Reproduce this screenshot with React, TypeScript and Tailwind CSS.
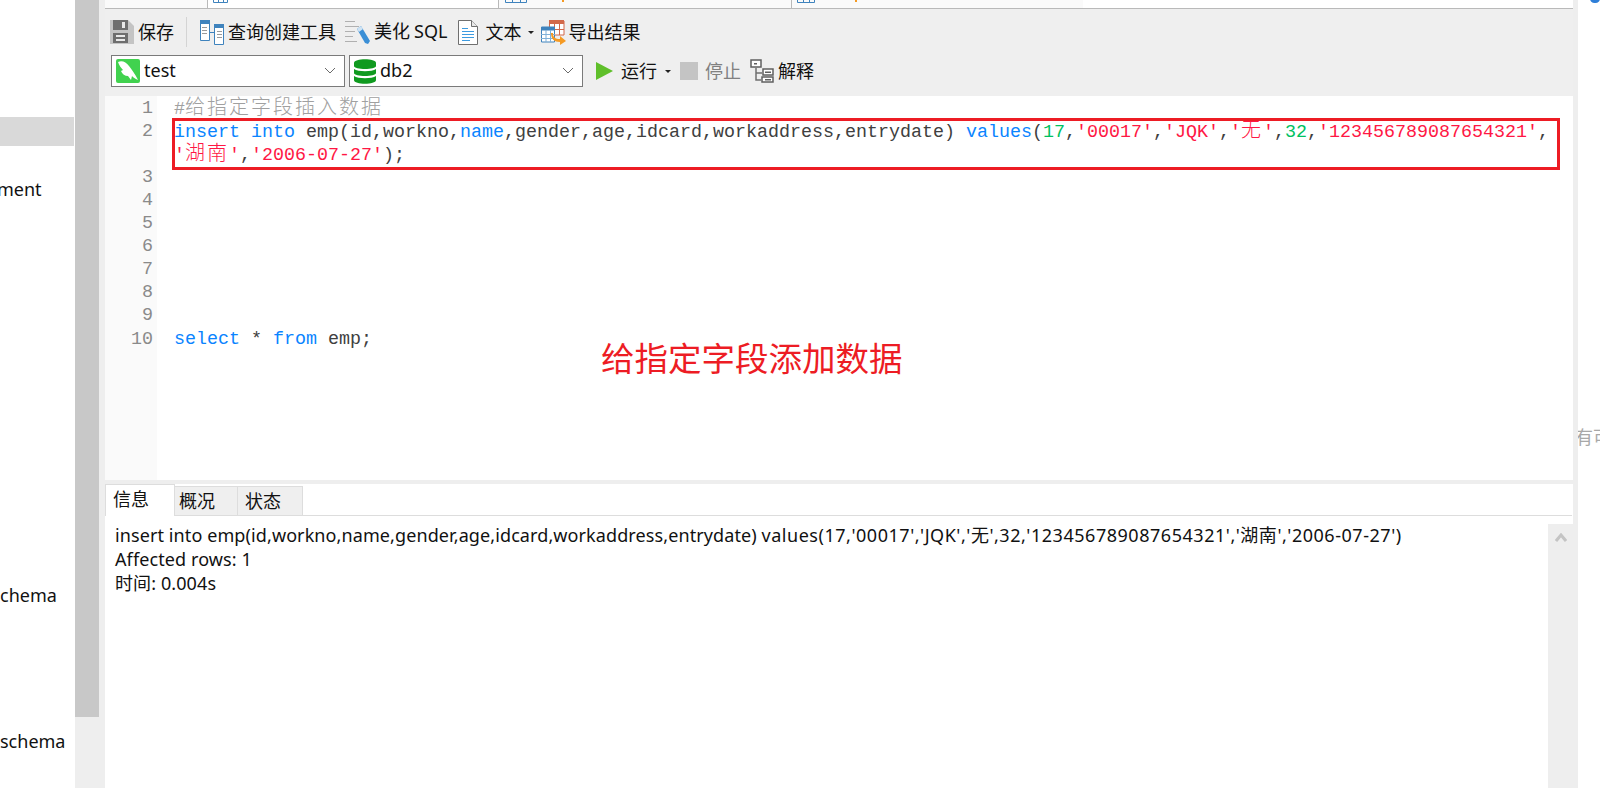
const ui = "font-['Segoe_UI','Noto_Sans','Noto_Sans_CJK_SC',sans-serif]";
const cjk = "font-['Noto_Sans_CJK_SC',sans-serif]";

function SaveIcon() {
    return (
        <svg width="24" height="24" viewBox="0 0 24 24" className="shrink-0">
            <path d="M0 0h18l6 6v18H0z" fill="#c4c4c4" />
            <path d="M3 0h15v10H3z" fill="#6e6e6e" />
            <path d="M12 2h3v6h-3z" fill="#e8e8e8" />
            <path d="M3 13h15v10H3z" fill="#6e6e6e" />
            <path d="M6 15h9v2H6zM6 19h9v2H6z" fill="#e8e8e8" />
        </svg>
    );
}

function QueryIcon() {
    return (
        <svg width="24" height="25" viewBox="0 0 24 25" className="shrink-0">
            <path d="M.5.5h9v20h-9z" fill="#fff" stroke="#3f83bd" />
            <path d="M0 0h10v4H0z" fill="#3f83bd" />
            <path d="M14.5 4.5h9v20h-9z" fill="#fff" stroke="#3f83bd" />
            <path d="M14 4h10v4H14z" fill="#3f83bd" />
            <path d="M10 12h4v1h-4z" fill="#3f83bd" />
            <path d="M2 7h5v1H2zM2 10h5v1H2zM2 13h5v1H2zM17 11h5v1h-5zM17 14h5v1h-5zM17 17h5v1h-5z" fill="#9a9a9a" />
        </svg>
    );
}

function BeautifyIcon() {
    return (
        <svg width="26" height="25" viewBox="0 0 26 25" className="shrink-0">
            <path d="M0 1h10v1H0zM0 6h14v1H0zM0 11h10v1H0zM0 16h8v1H0zM0 21h12v1H0z" fill="#b0b0b0" />
            <path d="M12 9l4-3 9 15-2 3-3-1z" fill="#3b8fd6" />
            <path d="M12 9l4-3 2 3-4 3z" fill="#cfe3f3" />
        </svg>
    );
}

function TextIcon() {
    return (
        <svg width="20" height="25" viewBox="0 0 20 25" className="shrink-0">
            <path d="M.5.5h13l6 6v18H.5z" fill="#fff" stroke="#6f6f6f" />
            <path d="M13.5.5v6h6" fill="#e8e8e8" stroke="#6f6f6f" />
            <path d="M4 8h6v1H4zM4 11h12v1H4zM4 14h12v1H4zM4 17h12v1H4zM4 20h8v1H4z" fill="#3d9be0" />
        </svg>
    );
}

function ExportIcon() {
    return (
        <svg width="25" height="25" viewBox="0 0 25 25" className="shrink-0">
            <path d="M8.5 1h14.5v14H8.5z" fill="#fff" stroke="#d2694a" />
            <path d="M8 0h15v4H8z" fill="#d2694a" />
            <path d="M13 4h1v11h-1zM18 4h1v11h-1zM8 9h15v1H8z" fill="#d2694a" />
            <path d="M.5 7h13v15H.5z" fill="#fff" stroke="#3f83bd" />
            <path d="M0 7h14v3.5H0z" fill="#3f83bd" />
            <path d="M4.500 10h1v12h-1zM9 10h1v12H9zM0 14h14v1H0zM0 18h14v1H0z" fill="#7fb0d8" />
            <path d="M12 13c0 4 2 6 7 6v-3l6 5-6 4v-3c-6 0-9-3-9-9z" fill="#f59a23" />
        </svg>
    );
}

function DolphinIcon() {
    return (
        <svg width="24" height="24" viewBox="0 0 24 24" className="shrink-0">
            <rect width="24" height="24" rx="2" fill="#41d24f" />
            <path d="M2 3c4-2 8 0 11 4 3 4 6 8 9 14-3-1-5-3-6-4l-1 4-3-4c-3 0-6-2-7-5l2-1C5 9 3 6 2 3z" fill="#fff" />
        </svg>
    );
}

function DatabaseIcon() {
    return (
        <svg width="22" height="25" viewBox="0 0 22 25" className="shrink-0">
            <path d="M0 4c0-5 22-5 22 0v3c0 4-22 4-22 0z" fill="#0f9a1f" />
            <path d="M0 10c4 3 18 3 22 0v4c0 4-22 4-22 0z" fill="#0f9a1f" />
            <path d="M0 17c4 3 18 3 22 0v4c0 5-22 5-22 0z" fill="#0f9a1f" />
        </svg>
    );
}

function ExplainIcon() {
    return (
        <svg width="24" height="24" viewBox="0 0 24 24" className="shrink-0">
            <path d="M6 9v12h5M6 14h6" fill="none" stroke="#707070" strokeWidth="1.5" />
            <path d="M1 1h10v7H1zM13 10h10v6H13zM12 18h11v5H12z" fill="#fff" stroke="#606060" strokeWidth="1.5" />
            <path d="M4 4h3v1.500H4zM15 12.500h6V14h-6zM15 20h6v1.500h-6z" fill="#606060" />
        </svg>
    );
}

function Chevron() {
    return (
        <svg width="12" height="8" viewBox="0 0 12 8" className="shrink-0">
            <path d="M1 1l5 5 5-5" fill="none" stroke="#6a6a6a" strokeWidth="1" />
        </svg>
    );
}

function Caret() {
    return <span className="w-0 h-0 border-x-[3px] border-x-transparent border-t-[3px] border-t-[#222]" />;
}

// solo se ve la parte baja del icono, la pestaña está cortada por arriba
function TabGlyph({ width }: { width: number }) {
    return (
        <svg width={width} height="3" viewBox={`0 0 ${width} 3`} className="shrink-0 block">
            <path d={`M.5 0v2.500h${width - 1}V0M${Math.round(width / 3)}.5 0v2M${Math.round((width * 2) / 3)}.5 0v2`} fill="none" stroke="#3f83bd" />
        </svg>
    );
}

function Select({ icon, label }: { icon: React.ReactNode; label: string }) {
    return (
        <div className="w-[234px] h-8 bg-white border border-[#7a7a7a] flex items-center pl-1 pr-2 gap-1 shrink-0">
            {icon}
            <span className={`${ui} text-[18px] text-[#111] flex-1 leading-none mb-[2px]`}>{label}</span>
            <Chevron />
        </div>
    );
}

const K = ({ children }: { children: string }) => <span className="text-[#0a84ff]">{children}</span>;
const S = ({ children }: { children: string }) => <span className="text-[#ff1744]">{children}</span>;
const N = ({ children }: { children: string }) => <span className="text-[#00c15f]">{children}</span>;
const C = ({ children, color }: { children: string; color: string }) => (
    <span className={`${cjk} text-[20px] tracking-[2px] leading-none font-light`} style={{ color }}>{children}</span>
);

export default function App() {
    const lineNos = [1, 2, null, 3, 4, 5, 6, 7, 8, 9];
    return (
        <div className="w-[1600px] h-[788px] flex bg-white overflow-hidden">
            {/* sidebar con scroll */}
            <div className="w-[75px] shrink-0 flex flex-col pt-[117px] text-[#111]">
                <div className="w-[74px] h-[29px] bg-[#d9d9d9]" />
                <div className={`${ui} text-[18px] leading-6 mt-[31px] -ml-[3px]`}>ment</div>
                <div className={`${ui} text-[18px] leading-6 mt-[382px]`}>chema</div>
                <div className={`${ui} text-[18px] leading-6 mt-[122px]`}>schema</div>
            </div>
            <div className="w-[24px] shrink-0 flex flex-col bg-[#eeeeee]">
                <div className="h-[717px] bg-[#c8c8c8]" />
            </div>
            <div className="w-[6px] shrink-0 bg-[#eeeeee]" />

            {/* panel principal */}
            <div className="w-[1468px] shrink-0 flex flex-col">
                {/* pestañas cortadas arriba */}
                <div className="h-[9px] flex border-b border-[#b9b9b9] overflow-hidden">
                    <div className="w-[103px] bg-[#fafafa] border-r border-[#b9b9b9]" />
                    <div className="w-[291px] bg-white border-r border-[#b9b9b9] pl-[5px]"><TabGlyph width={15} /></div>
                    <div className="w-[293px] bg-[#fafafa] border-r border-[#b9b9b9] pl-[6px] flex">
                        <TabGlyph width={22} />
                        <span className="ml-[35px] w-[2px] h-[2px] bg-[#f59a23]" />
                    </div>
                    <div className="w-[291px] bg-[#fafafa] pl-[5px] flex">
                        <TabGlyph width={18} />
                        <span className="ml-[40px] w-[2px] h-[2px] bg-[#f59a23]" />
                    </div>
                    <div className="flex-1 bg-white" />
                </div>

                {/* barra de herramientas */}
                <div className="h-[87px] bg-[#efefef] flex flex-col">
                    <div className={`${cjk} h-[46px] flex items-center pl-[5px] text-[18px] text-[#111]`}>
                        <SaveIcon />
                        <span className="ml-1 mb-[2px]">保存</span>
                        <div className="w-px h-[30px] bg-[#d4d4d4] ml-3" />
                        <div className="ml-[13px]"><QueryIcon /></div>
                        <span className="ml-1 mb-[2px]">查询创建工具</span>
                        <div className="ml-[9px]"><BeautifyIcon /></div>
                        <span className="ml-[3px] mb-[2px] whitespace-pre">美化 <span className={ui}>SQL</span></span>
                        <div className="ml-[11px]"><TextIcon /></div>
                        <span className="ml-[7px] mb-[2px]">文本</span>
                        <div className="ml-[7px] mr-[7px] flex"><Caret /></div>
                        <ExportIcon />
                        <span className="ml-[2px] mb-[2px]">导出结果</span>
                    </div>
                    <div className={`${cjk} flex items-center pl-[6px] gap-1 text-[18px] text-[#111]`}>
                        <Select icon={<DolphinIcon />} label="test" />
                        <Select icon={<DatabaseIcon />} label="db2" />
                        <svg width="17" height="18" viewBox="0 0 17 18" className="ml-[9px] shrink-0">
                            <path d="M0 0l17 9-17 9z" fill="#5fbf2a" />
                        </svg>
                        <span className="ml-1 mb-[2px]">运行</span>
                        <div className="ml-[4px] flex"><Caret /></div>
                        <div className="ml-[5px] w-[18px] h-[18px] bg-[#c4c4c4]" />
                        <span className="ml-[3px] mb-[2px] text-[#808080]">停止</span>
                        <div className="ml-[5px]"><ExplainIcon /></div>
                        <span className="mb-[2px]">解释</span>
                    </div>
                </div>

                {/* editor */}
                <div className="h-[384px] flex relative">
                    <div className="w-[52px] bg-[#fafafa] pt-px shrink-0 font-['Liberation_Mono',monospace] text-[18.33px] leading-[23px] text-[#8a8a8a] text-right pr-1">
                        {lineNos.map((n, i) => <div key={i} className="h-[23px]">{n}</div>)}
                        <div className="h-[23px] mt-px">10</div>
                    </div>
                    <div className="flex-1 font-['Liberation_Mono',monospace] text-[18.33px] leading-[23px] text-[#404040] pl-[17px] whitespace-pre">
                        <div className="h-[23px] text-[#a0a0a0]">#<C color="#a0a0a0">给指定字段插入数据</C></div>
                        <div className="h-[23px]">
                            <K>insert</K> <K>into</K> emp(id,workno,<K>name</K>,gender,age,idcard,workaddress,entrydate) <K>values</K>(<N>17</N>,<S>'00017'</S>,<S>'JQK'</S>,<S>'</S><C color="#ff1744">无</C><S>'</S>,<N>32</N>,<S>'123456789087654321'</S>,
                        </div>
                        <div className="h-[23px]">
                            <S>'</S><C color="#ff1744">湖南</C><S>'</S>,<S>'2006-07-27'</S>);
                        </div>
                        <div className="h-[163px]" />
                        <div className="h-[23px]"><K>select</K> * <K>from</K> emp;</div>
                    </div>
                    {/* anotaciones sobre el editor */}
                    <div className="absolute left-[67px] top-[22px] w-[1388px] h-[52px] border-[3px] border-[#ed1c24]" />
                    <div className={`${cjk} absolute left-[496px] top-[237px] text-[33.5px] leading-[48px] text-[#ed1c24]`}>给指定字段添加数据</div>
                </div>

                <div className="h-1 bg-[#eeeeee]" />

                {/* pestañas de resultado */}
                <div className="h-[32px] flex items-end border-b border-[#dddddd] mr-px relative">
                    <div className={`${cjk} w-[70px] h-[32px] bg-white border border-b-0 border-[#dddddd] pl-[7px] text-[18px] leading-[26px] text-[#111] -mb-px`}>信息</div>
                    <div className={`${cjk} w-[63px] h-[29px] bg-[#efefef] border-r border-t border-[#dddddd] pl-1 text-[18px] leading-[26px] text-[#111]`}>概况</div>
                    <div className={`${cjk} w-[65px] h-[29px] bg-[#efefef] border-r border-t border-[#dddddd] pl-[7px] text-[18px] leading-[26px] text-[#111]`}>状态</div>
                </div>

                {/* mensaje */}
                <div className="flex-1 flex">
                    <div className={`${ui} flex-1 pl-[10px] pt-[7px] text-[18px] leading-6 text-[#111] tracking-[0.1px]`}>
                        <div className="whitespace-nowrap">insert into emp(id,workno,name,gender,age,idcard,workaddress,entrydate) <span className="tracking-[0.53px]">values(17,'00017','JQK','无',32,'123456789087654321','湖南','2006-07-27')</span></div>
                        <div>Affected rows: 1</div>
                        <div>时间: 0.004s</div>
                    </div>
                    <div className="w-[25px] mt-[8px] bg-[#eeeeee] flex justify-center pt-[9px]">
                        <svg width="12" height="9" viewBox="0 0 12 9"><path d="M1 8l5-6 5 6" fill="none" stroke="#c4c4c4" strokeWidth="3" /></svg>
                    </div>
                </div>
            </div>

            <div className="w-[5px] shrink-0 bg-[#eeeeee]" />

            {/* panel derecho, cortado */}
            <div className="flex-1 relative overflow-hidden">
                <div className="absolute -top-[6px] right-0 w-[10px] h-[9px] rounded-full bg-[#2f7fd8]" />
                <div className={`${cjk} absolute top-[424px] -left-[3px] text-[18px] leading-6 text-[#a8a8a8] whitespace-nowrap`}>有可</div>
            </div>
        </div>
    );
}
